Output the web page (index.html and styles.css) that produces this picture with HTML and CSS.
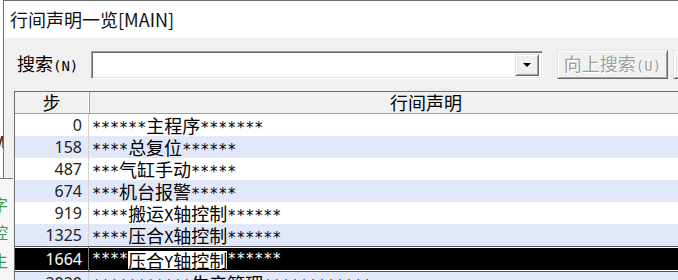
FILE: index.html
```html
<!DOCTYPE html>
<html lang="zh-CN">
<head>
    <meta charset="UTF-8">
    <title>行间声明一览[MAIN]</title>
    <link rel="stylesheet" href="styles.css">
</head>
<body>
    <span class="peek-m">M</span>
    <div class="window">
        <div class="titlebar">行间声明一览[MAIN]</div>
        <div class="toolbar">
            <label class="search-label"><span class="zh">搜索</span>(N)</label>
            <div class="combo">
                <div class="combo-btn"><span class="arrow"></span></div>
            </div>
            <button class="btn" disabled><span class="zh">向上搜索</span>(U)</button>
            <button class="btn btn-cut" disabled></button>
        </div>
        <div class="list">
            <div class="list-head">
                <div class="num"><span class="zh">步</span></div>
                <div class="text"><span class="zh">行间声明</span></div>
            </div>
            <div class="row">
                <div class="num">0</div>
                <div class="text">******<span class="zh">主程序</span>*******</div>
            </div>
            <div class="row alt">
                <div class="num">158</div>
                <div class="text">****<span class="zh">总复位</span>******</div>
            </div>
            <div class="row">
                <div class="num">487</div>
                <div class="text">***<span class="zh">气缸手动</span>*****</div>
            </div>
            <div class="row alt">
                <div class="num">674</div>
                <div class="text">***<span class="zh">机台报警</span>*****</div>
            </div>
            <div class="row">
                <div class="num">919</div>
                <div class="text">****<span class="zh">搬运</span>X<span class="zh">轴控制</span>******</div>
            </div>
            <div class="row alt">
                <div class="num">1325</div>
                <div class="text">****<span class="zh">压合</span>X<span class="zh">轴控制</span>******</div>
            </div>
            <div class="row selected">
                <div class="num">1664</div>
                <div class="text">****<span class="mark"><span class="zh">压合</span>Y<span class="zh">轴控制</span></span>******</div>
            </div>
            <div class="row alt">
                <div class="num">2020</div>
                <div class="text">***********<span class="zh">生产管理</span>************</div>
            </div>
        </div>
    </div>
    <div class="behind">
        <span>字</span>
        <span>控</span>
        <span>生</span>
    </div>
</body>
</html>
```

FILE: styles.css
```css
body {
    margin: 0;
    width: 678px;
    height: 280px;
    overflow: hidden;
    position: relative;
    background: #fff;
    font-family: "DejaVu Sans Mono", "Noto Sans CJK SC", monospace;
    font-size: 15px;
    color: #000;
}
.zh {
    font-family: "Noto Sans CJK SC", sans-serif;
    font-size: 18px;
}
.window {
    position: relative;
    margin-left: 3px;
    height: 280px;
    box-sizing: border-box;
    border-top: 1px solid #6e6e6e;
    border-left: 1px solid #6e6e6e;
    background: #f0f0f0;
    overflow: hidden;
}
.titlebar {
    height: 37px;
    padding-left: 6px;
    background: #fff;
    font-family: "Noto Sans CJK SC", sans-serif;
    font-size: 18px;
    line-height: 37px;
    color: #111;
}
.toolbar {
    display: flex;
    align-items: center;
    height: 53px;
    padding-left: 13px;
}
.toolbar > * {
    flex-shrink: 0;
}
.search-label {
    width: 63px;
    margin-right: 11px;
    line-height: 20px;
    white-space: nowrap;
    font-size: 14px;
}
.combo {
    width: 452px;
    height: 28px;
    box-sizing: border-box;
    background: #fff;
    border: 1px solid;
    border-color: #a0a0a0 #fff #fff #a0a0a0;
    box-shadow: inset 1px 1px 0 #696969, inset -1px -1px 0 #e3e3e3;
    display: flex;
    justify-content: flex-end;
    align-items: center;
    padding-right: 3px;
}
.combo-btn {
    width: 24px;
    height: 22px;
    box-sizing: border-box;
    background: #f0f0f0;
    border: 1px solid;
    border-color: #e3e3e3 #696969 #696969 #e3e3e3;
    box-shadow: inset 1px 1px 0 #fff, inset -1px -1px 0 #a0a0a0;
    display: flex;
    justify-content: center;
    align-items: center;
}
.arrow {
    width: 0;
    height: 0;
    border-left: 4px solid transparent;
    border-right: 4px solid transparent;
    border-top: 4px solid #000;
}
.btn {
    margin-left: 14px;
    width: 111px;
    height: 29px;
    padding: 0;
    background: #f0f0f0;
    border: 1px solid;
    border-color: #e3e3e3 #696969 #696969 #e3e3e3;
    box-shadow: inset 1px 1px 0 #fff, inset -1px -1px 0 #a0a0a0;
    font-family: "DejaVu Sans Mono", monospace;
    font-size: 14px;
    line-height: 20px;
    color: #a0a0a0;
    text-shadow: 1px 1px 0 #fff;
    white-space: nowrap;
}
.btn-cut {
    margin-left: 5px;
    width: 40px;
}
.list {
    margin-left: 10px;
    width: 748px;
    border-left: 1px solid #6e6e6e;
    border-top: 1px solid #6e6e6e;
}
.list-head {
    display: flex;
    height: 21px;
    background: #f0f0f0;
    border-bottom: 1px solid #a0a0a0;
    line-height: 21px;
}
.list-head .num {
    width: 73px;
    text-align: center;
    border-right: 1px solid #fff;
    box-shadow: 1px 0 0 #a0a0a0;
}
.list-head .text {
    flex: 1;
    text-align: center;
}
.row {
    display: flex;
    height: 22px;
    line-height: 22px;
    background: #fff;
    white-space: nowrap;
}
.row.alt {
    background: #e1e8fa;
}
.row .num {
    width: 67px;
    padding-right: 6px;
    text-align: right;
    font-family: "Noto Sans", sans-serif;
    font-size: 16px;
    color: #222;
    border-right: 1px solid #d4d4d4;
}
.row .text {
    flex: 1;
    padding-left: 3px;
    overflow: hidden;
}
.row.selected {
    height: 24px;
    line-height: 24px;
    background: #000;
    color: #fff;
    border-top: 1px solid #555;
    border-bottom: 1px solid #555;
    box-shadow: inset 0 1px 0 #fff, inset 0 -1px 0 #fff;
}
.row.selected .num {
    color: #fff;
    border-right-color: #777;
}
.mark {
    display: inline-block;
    height: 18px;
    line-height: 18px;
    vertical-align: middle;
    background: #fff;
    color: #000;
}
.peek-m {
    position: absolute;
    left: -8px;
    top: 134px;
    font-family: "Liberation Sans", sans-serif;
    font-size: 16px;
    font-weight: bold;
    color: #333;
}
.behind {
    position: absolute;
    left: 0;
    top: 178px;
    width: 13px;
    height: 102px;
    overflow: hidden;
    background: #f6f6f6;
    border-top: 1px solid #777;
    display: flex;
    flex-direction: column;
    gap: 10px;
    padding-top: 16px;
    box-sizing: border-box;
}
.behind span {
    margin-left: -8px;
    font-family: "Noto Sans CJK SC", sans-serif;
    font-size: 16px;
    line-height: 18px;
    color: #3c9a48;
}
```
